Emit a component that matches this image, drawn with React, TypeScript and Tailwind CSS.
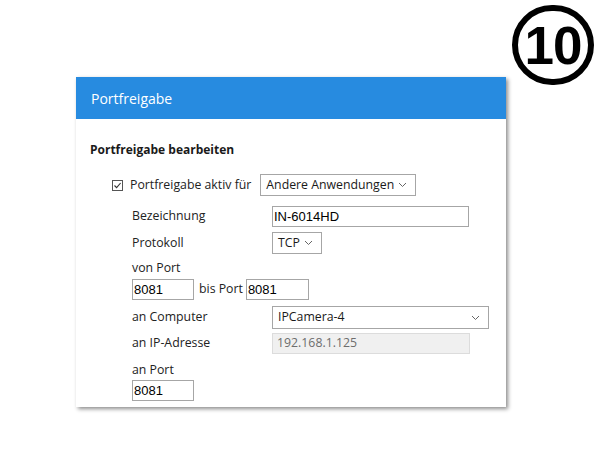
import React from "react";

const labelFont = { fontFamily: '"Open Sans", "Noto Sans", sans-serif' };

function Chevron() {
  return (
    <svg width="9" height="6" viewBox="0 0 9 6" className="shrink-0">
      <path d="M1 1 L4.5 4.5 L8 1" fill="none" stroke="#666" strokeWidth="1" />
    </svg>
  );
}

function Select({ value, className }: { value: string; className: string }) {
  return (
    <div
      className={`flex items-center justify-between whitespace-nowrap border border-[#a6a6a6] bg-white pl-[5px] pr-[8px] text-[12.3px] text-[#1a1a1a] ${className}`}
      style={labelFont}
    >
      <span>{value}</span>
      <Chevron />
    </div>
  );
}

function Input({ value, className, disabled }: { value: string; className: string; disabled?: boolean }) {
  return (
    <div
      className={`flex items-center whitespace-nowrap border pl-[1px] ${
        disabled ? "border-[#dcdcdc] bg-[#f0f0f0] text-[12.3px] text-[#6d6d6d]" : "border-[#a6a6a6] bg-white text-[13px] text-black"
      } ${className}`}
      style={disabled ? labelFont : { fontFamily: '"Liberation Sans", Arial, sans-serif' }}
    >
      {value}
    </div>
  );
}

export default function App() {
  return (
    <div className="relative h-[450px] w-[600px] overflow-hidden bg-white">
      <div className="absolute left-[512px] top-[5px] flex h-[80px] w-[82px] items-center justify-center rounded-full border-[6px] border-black">
        <span
          className="text-[53px] font-bold leading-none tracking-[-1px] text-black"
          style={{ fontFamily: '"Liberation Sans", Arial, sans-serif' }}
        >
          10
        </span>
      </div>

      <div className="ml-[76px] mt-[77px] w-[430px] bg-white shadow-[2px_2px_4px_rgba(0,0,0,0.45)]" style={labelFont}>
        <div className="flex h-[42px] items-center bg-[#278be0] pl-[15px] text-[14px] text-white">Portfreigabe</div>
        <div className="flex flex-col pb-[6px] pl-[14px] text-[12.3px] text-[#222]">
          <div className="mt-[22px] h-[18px] text-[12px] font-bold leading-[18px] text-[#1a1a1a]">Portfreigabe bearbeiten</div>

          <div className="mt-[15px] flex h-[22px] items-center">
            <div className="ml-[22px] flex h-[11px] w-[11px] items-center justify-center border border-[#555]">
              <svg width="9" height="9" viewBox="0 0 9 9">
                <path d="M1.5 4.5 L3.6 6.7 L7.6 2" fill="none" stroke="#333" strokeWidth="1.1" />
              </svg>
            </div>
            <span className="ml-[7px]">Portfreigabe aktiv für</span>
            <Select value="Andere Anwendungen" className="ml-[9px] h-[22px] w-[156px]" />
          </div>

          <div className="mt-[10px] flex h-[21px] items-center">
            <span className="ml-[42px] w-[140px]">Bezeichnung</span>
            <Input value="IN-6014HD" className="h-[21px] w-[197px]" />
          </div>

          <div className="mt-[5px] flex h-[22px] items-center">
            <span className="ml-[42px] w-[140px]">Protokoll</span>
            <Select value="TCP" className="h-[22px] w-[50px]" />
          </div>

          <div className="ml-[42px] mt-[5px] h-[18px] leading-[18px]">von Port</div>

          <div className="ml-[42px] mt-[2px] flex h-[21px] items-center">
            <Input value="8081" className="h-[21px] w-[62px]" />
            <span className="ml-[5px] mr-[3px]">bis Port</span>
            <Input value="8081" className="h-[21px] w-[63px]" />
          </div>

          <div className="mt-[6px] flex h-[23px] items-center">
            <span className="ml-[42px] w-[140px]">an Computer</span>
            <Select value="IPCamera-4" className="h-[23px] w-[217px]" />
          </div>

          <div className="mt-[4px] flex h-[21px] items-center">
            <span className="ml-[42px] w-[140px]">an IP-Adresse</span>
            <Input value="192.168.1.125" disabled className="h-[21px] w-[198px] pl-[4px]" />
          </div>

          <div className="ml-[42px] mt-[7px] h-[18px] leading-[18px]">an Port</div>
          <div className="ml-[42px] mt-[1px] flex">
            <Input value="8081" className="h-[21px] w-[62px]" />
          </div>
        </div>
      </div>
    </div>
  );
}
